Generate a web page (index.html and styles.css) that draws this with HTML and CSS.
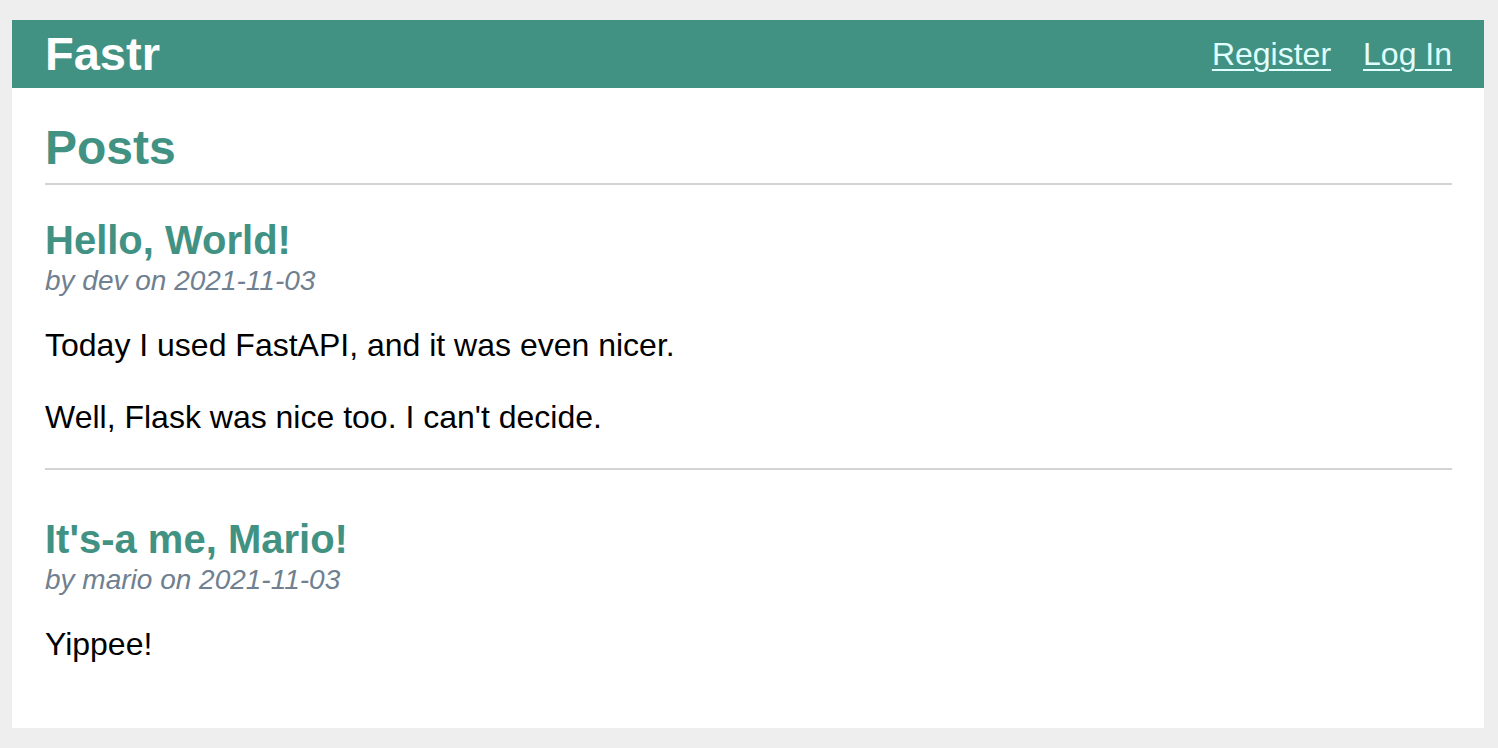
FILE: index.html
```html
<!DOCTYPE html>
<html lang="en">
<head>
<meta charset="utf-8">
<title>Posts - Fastr</title>
<link rel="stylesheet" href="styles.css">
</head>
<body>
  <nav class="nav">
    <h1 class="brand">Fastr</h1>
    <ul class="nav-links">
      <li><a href="#">Register</a></li>
      <li><a href="#">Log In</a></li>
    </ul>
  </nav>
  <section class="content">
    <header class="page-header">
      <h1 class="page-title">Posts</h1>
    </header>
    <article class="post post-first">
      <header class="post-header">
        <h1 class="post-title">Hello, World!</h1>
        <div class="about">by dev on 2021-11-03</div>
      </header>
      <div class="post-body">Today I used FastAPI, and it was even nicer.

Well, Flask was nice too. I can't decide.</div>
    </article>
    <hr class="divider">
    <article class="post post-next">
      <header class="post-header">
        <h1 class="post-title">It's-a me, Mario!</h1>
        <div class="about">by mario on 2021-11-03</div>
      </header>
      <div class="post-body">Yippee!</div>
    </article>
  </section>
</body>
</html>
```

FILE: styles.css
```css
html {
  background: #eeeeee;
  font-family: "Liberation Sans", Arial, Helvetica, sans-serif;
}

body {
  margin: 20px 14px 20px 12px;
  background: #ffffff;
  min-height: 708px;
  box-sizing: border-box;
}

.nav {
  display: flex;
  align-items: center;
  height: 68px;
  padding: 0 32px 0 33px;
  background: #419283;
}

.brand {
  flex: auto;
  margin: 0;
  font-size: 47px;
  line-height: 56px;
  font-weight: bold;
  color: #ffffff;
}

.nav-links {
  display: flex;
  gap: 32px;
  list-style: none;
  margin: 0;
  padding: 0;
}

.nav-links a {
  display: block;
  font-size: 32px;
  line-height: 36px;
  color: #e0ffff;
  text-decoration: underline;
  text-decoration-thickness: 2px;
  text-underline-offset: 4px;
}

.content {
  padding: 0 32px 0 33px;
}

.page-header {
  border-bottom: 2px solid #d3d3d3;
  padding-bottom: 7px;
}

.page-title {
  margin: 32px 0 0;
  font-size: 48px;
  line-height: 56px;
  font-weight: bold;
  color: #419283;
}

.post-first {
  margin-top: 31px;
}

.post-next {
  margin-top: 45px;
}

.post-title {
  margin: 0;
  font-size: 40px;
  line-height: 48px;
  font-weight: bold;
  color: #419283;
}

.about {
  font-size: 28px;
  line-height: 34px;
  font-style: italic;
  color: #708090;
}

.post-body {
  margin-top: 29px;
  font-size: 32px;
  line-height: 36px;
  color: #000000;
  white-space: pre-line;
}

.divider {
  margin: 33px 0 0;
  border: none;
  border-top: 2px solid #d3d3d3;
  height: 0;
}
```
